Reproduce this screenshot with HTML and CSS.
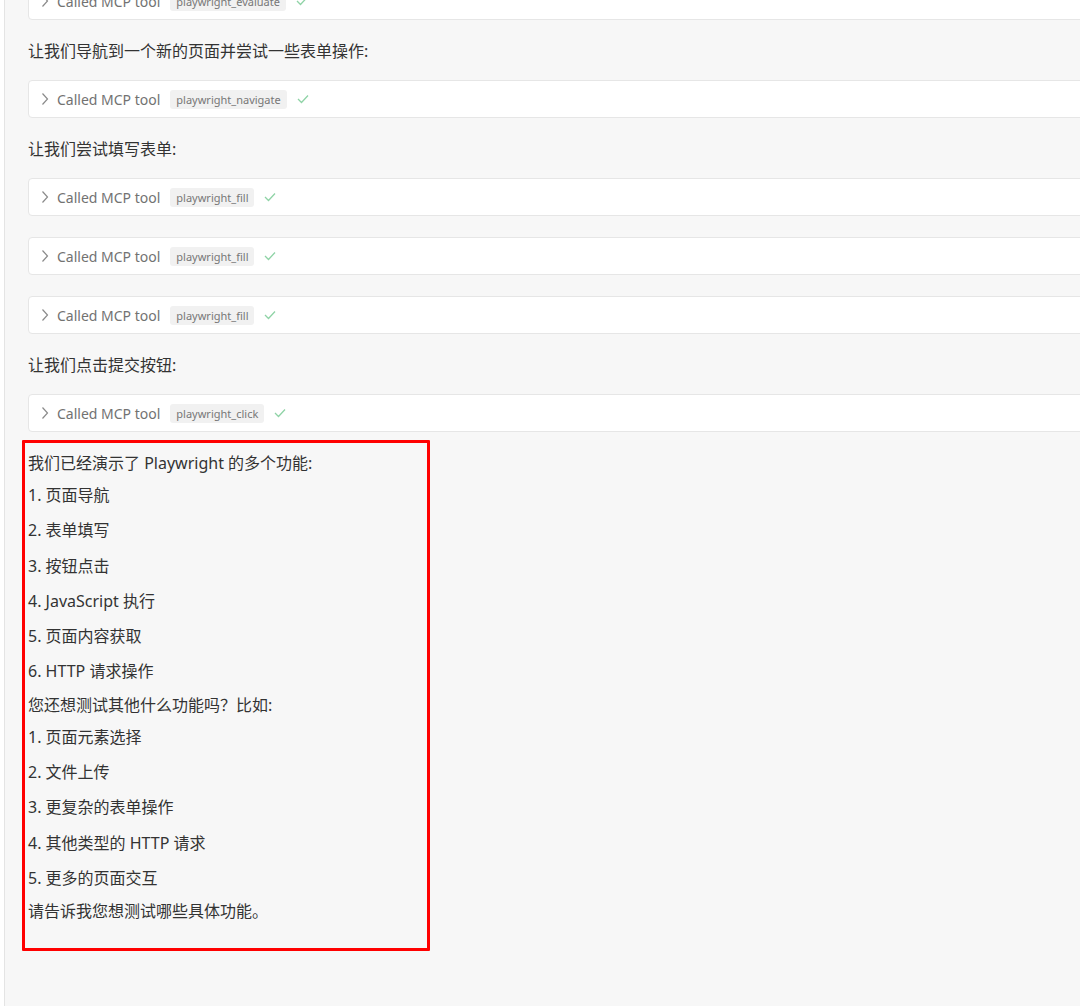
FILE: index.html
```html
<!DOCTYPE html>
<html lang="zh-CN">
<head>
    <meta charset="UTF-8">
    <meta name="viewport" content="width=device-width, initial-scale=1.0">
    <title>Playwright MCP</title>
    <link rel="stylesheet" href="styles.css">
</head>
<body>
    <div class="pane">
        <div class="thread">
            <div class="tool first">
                <svg class="chevron" width="10" height="14" viewBox="0 0 10 14"><path d="M2.5 1.5 L7.5 7 L2.5 12.5" /></svg>
                <span class="label">Called MCP tool</span>
                <span class="badge">playwright_evaluate</span>
                <svg class="check" width="12" height="10" viewBox="0 0 12 10"><path d="M1 5 L4.5 8.5 L11 1.5" /></svg>
            </div>

            <p class="note">让我们导航到一个新的页面并尝试一些表单操作:</p>

            <div class="tool">
                <svg class="chevron" width="10" height="14" viewBox="0 0 10 14"><path d="M2.5 1.5 L7.5 7 L2.5 12.5" /></svg>
                <span class="label">Called MCP tool</span>
                <span class="badge">playwright_navigate</span>
                <svg class="check" width="12" height="10" viewBox="0 0 12 10"><path d="M1 5 L4.5 8.5 L11 1.5" /></svg>
            </div>

            <p class="note">让我们尝试填写表单:</p>

            <div class="tool">
                <svg class="chevron" width="10" height="14" viewBox="0 0 10 14"><path d="M2.5 1.5 L7.5 7 L2.5 12.5" /></svg>
                <span class="label">Called MCP tool</span>
                <span class="badge">playwright_fill</span>
                <svg class="check" width="12" height="10" viewBox="0 0 12 10"><path d="M1 5 L4.5 8.5 L11 1.5" /></svg>
            </div>
            <div class="tool">
                <svg class="chevron" width="10" height="14" viewBox="0 0 10 14"><path d="M2.5 1.5 L7.5 7 L2.5 12.5" /></svg>
                <span class="label">Called MCP tool</span>
                <span class="badge">playwright_fill</span>
                <svg class="check" width="12" height="10" viewBox="0 0 12 10"><path d="M1 5 L4.5 8.5 L11 1.5" /></svg>
            </div>
            <div class="tool">
                <svg class="chevron" width="10" height="14" viewBox="0 0 10 14"><path d="M2.5 1.5 L7.5 7 L2.5 12.5" /></svg>
                <span class="label">Called MCP tool</span>
                <span class="badge">playwright_fill</span>
                <svg class="check" width="12" height="10" viewBox="0 0 12 10"><path d="M1 5 L4.5 8.5 L11 1.5" /></svg>
            </div>

            <p class="note">让我们点击提交按钮:</p>

            <div class="tool">
                <svg class="chevron" width="10" height="14" viewBox="0 0 10 14"><path d="M2.5 1.5 L7.5 7 L2.5 12.5" /></svg>
                <span class="label">Called MCP tool</span>
                <span class="badge">playwright_click</span>
                <svg class="check" width="12" height="10" viewBox="0 0 12 10"><path d="M1 5 L4.5 8.5 L11 1.5" /></svg>
            </div>

            <!-- final answer, marked with the red box -->
            <div class="reply highlight">
                <p>我们已经演示了 Playwright 的多个功能:</p>
                <ul class="steps">
                    <li>1. 页面导航</li>
                    <li>2. 表单填写</li>
                    <li>3. 按钮点击</li>
                    <li>4. JavaScript 执行</li>
                    <li>5. 页面内容获取</li>
                    <li>6. HTTP 请求操作</li>
                </ul>
                <p>您还想测试其他什么功能吗？比如:</p>
                <ul class="steps">
                    <li>1. 页面元素选择</li>
                    <li>2. 文件上传</li>
                    <li>3. 更复杂的表单操作</li>
                    <li>4. 其他类型的 HTTP 请求</li>
                    <li>5. 更多的页面交互</li>
                </ul>
                <p>请告诉我您想测试哪些具体功能。</p>
            </div>
        </div>
    </div>
</body>
</html>
```

FILE: styles.css
```css
/* Page */
html, body {
    margin: 0;
    padding: 0;
    background-color: #fff;
    overflow: hidden;
}

body {
    font-family: "Noto Sans", "Noto Sans CJK SC", sans-serif;
    color: #333;
}

.pane {
    margin-left: 4px;
    border-left: 1px solid #e4e4e4;
    background-color: #f7f7f7;
    min-height: 1060px;
    padding-left: 23px;
}

/* Tool call rows */
.tool {
    display: flex;
    align-items: center;
    height: 36px;
    margin-right: -40px;
    padding: 0 11px;
    background-color: #fff;
    border: 1px solid #e6e6e6;
    border-radius: 4px;
}

.tool.first {
    margin-top: -18px;
}

.tool + .tool {
    margin-top: 21px;
}

.chevron {
    margin-right: 7px;
}

.chevron path {
    fill: none;
    stroke: #8a8a8a;
    stroke-width: 1.2;
}

.label {
    font-size: 14px;
    color: #727272;
    margin-right: 10px;
}

.badge {
    font-size: 11px;
    line-height: 19px;
    height: 19px;
    padding: 0 6px;
    color: #777;
    background-color: #f1f1f1;
    border-radius: 3px;
    margin-right: 10px;
}

.check path {
    fill: none;
    stroke: #8fd3a6;
    stroke-width: 1.3;
}

/* Assistant text */
.note {
    margin: 0;
    padding: 18px 0 16px;
    font-size: 16px;
    line-height: 26px;
}

.reply {
    font-size: 16px;
}

.reply p {
    margin: 0;
    line-height: 30px;
}

.steps {
    list-style-type: none;
    margin: 0;
    padding: 0;
}

.steps li {
    line-height: 35.3px;
}

/* Red annotation box */
.highlight {
    width: 408px;
    box-sizing: border-box;
    margin: 8px 0 0 -6px;
    padding: 5px 3px 22px;
    border: 3px solid #ff0000;
    border-radius: 1px;
}
```
